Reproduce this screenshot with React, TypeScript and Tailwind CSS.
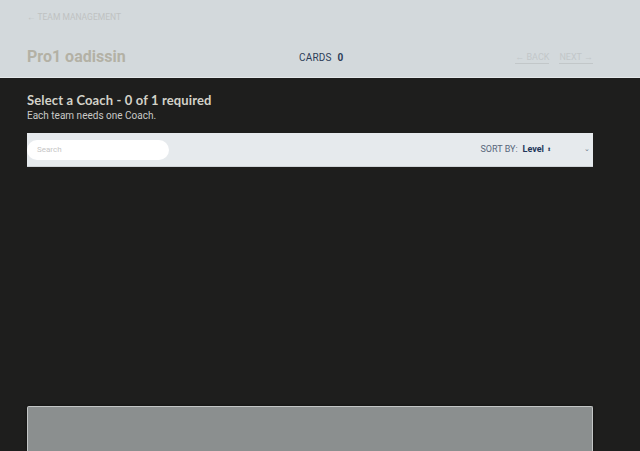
import React from "react";

export default function App() {
  return (
    <div className="w-[640px] h-[451px] overflow-hidden bg-[#1e1e1d] flex flex-col" style={{ fontFamily: "'Liberation Sans', Arial, sans-serif" }}>
      <header className="h-[78px] bg-[#d3d9dc] border-b border-[#e4e8ea] pl-[27px] pr-[47px] flex flex-col shrink-0">
        <div className="pt-[11px] h-[24px] text-[8.5px] leading-[12px] text-[#bfc2c2]" style={{ fontFamily: "Roboto, sans-serif" }}>
          ← TEAM MANAGEMENT
        </div>
        <div className="mt-[22px] flex items-center h-[22px]">
          <div className="w-[272px] text-[16px] font-bold text-[#b3b1a5]" style={{ fontFamily: "Roboto, sans-serif" }}>Pro1 oadissin</div>
          <div className="flex-1 text-[10px] text-[#2d3d58] tracking-[0.02em]" style={{ fontFamily: "Roboto, sans-serif" }}>
            CARDS <span className="font-bold ml-[3px]">0</span>
          </div>
          <div className="flex gap-[10px] text-[9px] text-[#c2c7c9]" style={{ fontFamily: "Roboto, sans-serif" }}>
            <span className="border-b border-[#c2c7c9] leading-[12px]">← BACK</span>
            <span className="border-b border-[#c2c7c9] leading-[12px]">NEXT →</span>
          </div>
        </div>
      </header>
      <main className="pl-[27px] pr-[47px] flex flex-col flex-1">
        <h1 className="mt-[14px] text-[13px] leading-[16px] font-bold text-[#d3d2c9] tracking-[0.01em]" style={{ fontFamily: "Lato, sans-serif" }}>
          Select a Coach - 0 of 1 required
        </h1>
        <p className="mt-[1px] text-[10px] leading-[13px] text-[#c9c9c7]" style={{ fontFamily: "Roboto, sans-serif" }}>Each team needs one Coach.</p>
        <div className="mt-[11px] h-[34px] bg-[#e6eaed] border-b border-[#cfd3d6] flex items-center">
          <div className="w-[142px] h-[20px] bg-white rounded-full flex items-center pl-[10px] text-[8px] text-[#c6c6c6]" style={{ fontFamily: "Roboto, sans-serif" }}>
            Search
          </div>
          <div className="flex-1" />
          <div className="flex items-center text-[9px] text-[#57667b]" style={{ fontFamily: "Roboto, sans-serif" }}>
            <span>SORT BY:</span>
            <span className="ml-[5px] font-bold text-[#23365a]">Level</span>
            <span className="ml-[3px] text-[5px] text-[#23365a]">⬍</span>
            <span className="ml-[33px] mr-[3px] text-[7px] text-[#6c7a8c]">⌄</span>
          </div>
        </div>
        <div className="mt-[239px] flex-1 bg-[#8b8f8f] border border-[#c3c6c6] border-b-0 rounded-t-[2px] shadow-[0_0_3px_rgba(0,0,0,0.5)]" />
      </main>
    </div>
  );
}
